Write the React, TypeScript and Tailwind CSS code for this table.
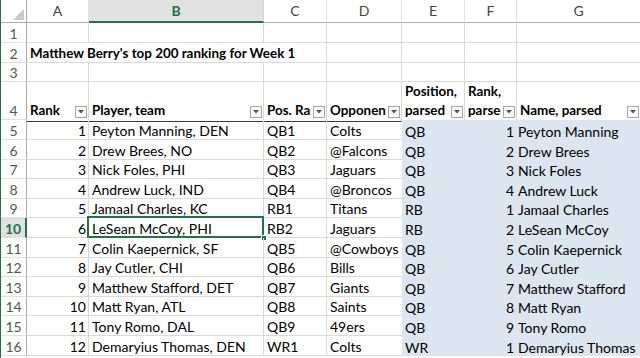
import React from "react";

const COLS = "grid grid-cols-[26px_62px_175px_63px_75px_63px_52px_124px]";

type Row = [number, string, string, string, string, number, string];
const data: Row[] = [
  [1, "Peyton Manning, DEN", "QB1", "Colts", "QB", 1, "Peyton Manning"],
  [2, "Drew Brees, NO", "QB2", "@Falcons", "QB", 2, "Drew Brees"],
  [3, "Nick Foles, PHI", "QB3", "Jaguars", "QB", 3, "Nick Foles"],
  [4, "Andrew Luck, IND", "QB4", "@Broncos", "QB", 4, "Andrew Luck"],
  [5, "Jamaal Charles, KC", "RB1", "Titans", "RB", 1, "Jamaal Charles"],
  [6, "LeSean McCoy, PHI", "RB2", "Jaguars", "RB", 2, "LeSean McCoy"],
  [7, "Colin Kaepernick, SF", "QB5", "@Cowboys", "QB", 5, "Colin Kaepernick"],
  [8, "Jay Cutler, CHI", "QB6", "Bills", "QB", 6, "Jay Cutler"],
  [9, "Matthew Stafford, DET", "QB7", "Giants", "QB", 7, "Matthew Stafford"],
  [10, "Matt Ryan, ATL", "QB8", "Saints", "QB", 8, "Matt Ryan"],
  [11, "Tony Romo, DAL", "QB9", "49ers", "QB", 9, "Tony Romo"],
  [12, "Demaryius Thomas, DEN", "WR1", "Colts", "WR", 1, "Demaryius Thomas"],
];

function FilterBtn() {
  return (
    <div className="shrink-0 w-[12px] h-[12px] border border-[#a6a6a6] bg-[#fbfbfb] flex items-center justify-center">
      <svg width="6" height="4" viewBox="0 0 6 4">
        <polygon points="0,0 6,0 3,3.5" fill="#555" />
      </svg>
    </div>
  );
}

function RowHead({ n, h, selected }: { n: number; h: string; selected?: boolean }) {
  return (
    <div
      className={`${h} flex items-end justify-center text-[14px] leading-[17px] ${
        selected
          ? "bg-[#e1e1e1] text-[#217346] font-bold border-r-2 border-r-[#217346] border-b border-b-[#e1e1e1]"
          : "bg-white text-[#555] border-r border-r-[#ababab] border-b border-b-[#e1e1e1]"
      }`}
    >
      {n}
    </div>
  );
}

const grid = "border-r border-b border-[#d9d9d9]";

function HeaderCell({ top, bottom }: { top?: string; bottom: string }) {
  return (
    <div className={`${grid} border-b-[#3a3a3a] flex flex-col justify-end pl-[3px] pr-[1px] pb-[1px] font-bold text-[13.4px] leading-[19px] text-black`}>
      {top && <div className="whitespace-nowrap overflow-hidden">{top}</div>}
      <div className="flex items-end gap-[2px]">
        <div className="flex-1 min-w-0 whitespace-nowrap overflow-hidden">{bottom}</div>
        <div className="mb-[2px]">
          <FilterBtn />
        </div>
      </div>
    </div>
  );
}

export default function App() {
  const bodyH = "h-[19.6px]";
  return (
    <div
      className="w-[640px] h-[358px] overflow-hidden bg-white border-l border-[#217346] text-black"
      style={{ fontFamily: "Lato, 'Open Sans', sans-serif" }}
    >
      {/* column header */}
      <div className={`${COLS} h-[23px] text-[14px] leading-[22px]`}>
        <div className="relative border-r border-b border-[#ababab] bg-white">
          <svg className="absolute left-[12px] top-[9px]" width="11" height="11" viewBox="0 0 11 11">
            <polygon points="11,0 11,11 0,11" fill="#c9c9c9" />
          </svg>
        </div>
        {["A", "B", "C", "D", "E", "F", "G"].map((c) =>
          c === "B" ? (
            <div
              key={c}
              className="bg-[#e1e1e1] text-[#217346] font-bold text-center border-r border-r-[#d4d4d4] border-b-2 border-b-[#217346] leading-[21px]"
            >
              {c}
            </div>
          ) : (
            <div key={c} className="bg-white text-[#444] text-center border-r border-r-[#e1e1e1] border-b border-b-[#ababab]">
              {c}
            </div>
          )
        )}
      </div>

      {/* rows 1-3 */}
      <div className={`${COLS} h-[19.8px]`}>
        <RowHead n={1} h="h-[19.8px]" />
        {Array.from({ length: 7 }).map((_, i) => (
          <div key={i} className={grid} />
        ))}
      </div>
      <div className={`${COLS} h-[19.8px]`}>
        <RowHead n={2} h="h-[19.8px]" />
        <div className="border-b border-[#d9d9d9] relative overflow-visible flex items-end pl-[3px]">
          <span className="whitespace-nowrap font-bold text-[13.4px] leading-[17px]">Matthew Berry's top 200 ranking for Week 1</span>
        </div>
        <div className="border-b border-[#d9d9d9]" />
        <div className={grid} />
        {Array.from({ length: 4 }).map((_, i) => (
          <div key={i} className={grid} />
        ))}
      </div>
      <div className={`${COLS} h-[19.8px]`}>
        <RowHead n={3} h="h-[19.8px]" />
        {Array.from({ length: 7 }).map((_, i) => (
          <div key={i} className={grid} />
        ))}
      </div>

      {/* row 4 header */}
      <div className={`${COLS} h-[38px]`}>
        <RowHead n={4} h="h-[38px]" />
        <HeaderCell bottom="Rank" />
        <HeaderCell bottom="Player, team" />
        <HeaderCell bottom="Pos. Rank" />
        <HeaderCell bottom="Opponent" />
        <HeaderCell top="Position," bottom="parsed" />
        <HeaderCell top="Rank," bottom="parsed" />
        <HeaderCell bottom="Name, parsed" />
      </div>

      {/* body */}
      {data.map((r, i) => {
        const rowNum = i + 5;
        const sel = rowNum === 10;
        return (
          <div key={i} className={`${COLS} ${bodyH} text-[14px] leading-[17px]`}>
            <RowHead n={rowNum} h={bodyH} selected={sel} />
            <div className={`${grid} flex items-end justify-end pr-[2px]`}>{r[0]}</div>
            <div className={`${grid} relative flex items-end pl-[3px] whitespace-nowrap`}>
              {r[1]}
              {sel && (
                <>
                  <div className="absolute left-[-2px] top-[-2px] right-[-1px] bottom-[-1px] border-2 border-[#217346] pointer-events-none" />
                  <div className="absolute right-[-4px] bottom-[-4px] w-[6px] h-[6px] bg-[#217346] border border-white" />
                </>
              )}
            </div>
            <div className={`${grid} flex items-end pl-[3px] whitespace-nowrap`}>{r[2]}</div>
            <div className="border-b border-[#d9d9d9] flex items-end pl-[3px] whitespace-nowrap">{r[3]}</div>
            <div className="bg-[#dce6f1] flex items-end pl-[3px]">{r[4]}</div>
            <div className="bg-[#dce6f1] flex items-end justify-end pr-[3px]">{r[5]}</div>
            <div className="bg-[#dce6f1] flex items-end pl-[1px] whitespace-nowrap">{r[6]}</div>
          </div>
        );
      })}
    </div>
  );
}
